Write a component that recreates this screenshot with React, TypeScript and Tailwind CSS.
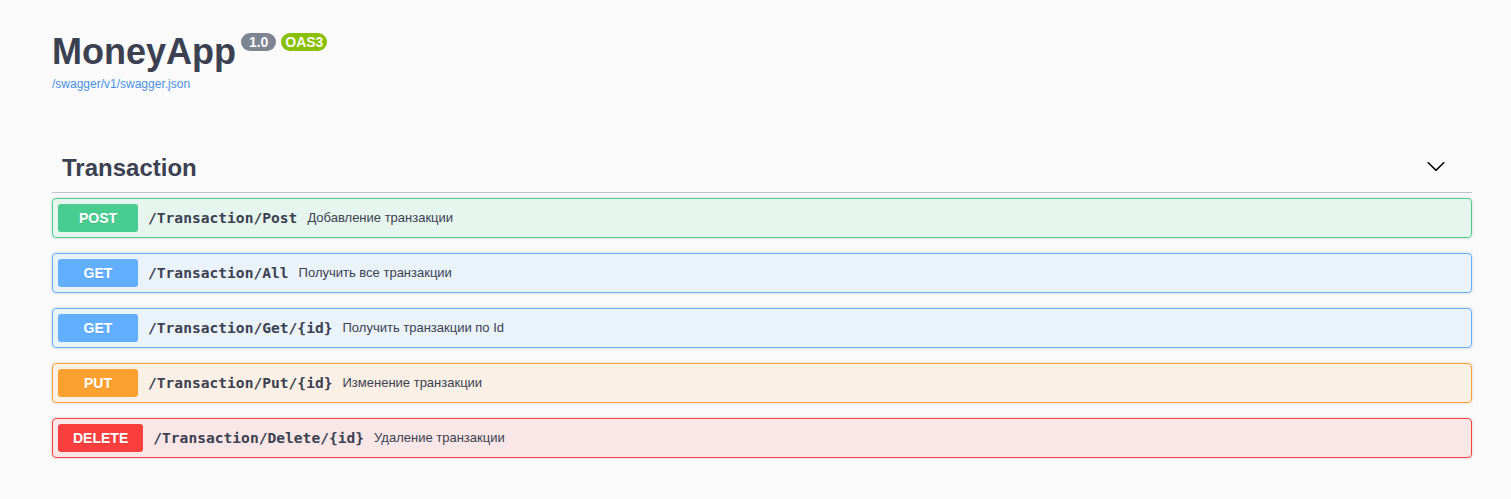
import React from "react";

type Op = {
  method: string;
  path: string;
  desc: string;
  bg: string;
  border: string;
  badge: string;
};

const ops: Op[] = [
  {
    method: "POST",
    path: "/Transaction/Post",
    desc: "Добавление транзакции",
    bg: "bg-[rgba(73,204,144,0.1)]",
    border: "border-[#49cc90]",
    badge: "bg-[#49cc90]",
  },
  {
    method: "GET",
    path: "/Transaction/All",
    desc: "Получить все транзакции",
    bg: "bg-[rgba(97,175,254,0.1)]",
    border: "border-[#61affe]",
    badge: "bg-[#61affe]",
  },
  {
    method: "GET",
    path: "/Transaction/Get/{id}",
    desc: "Получить транзакции по Id",
    bg: "bg-[rgba(97,175,254,0.1)]",
    border: "border-[#61affe]",
    badge: "bg-[#61affe]",
  },
  {
    method: "PUT",
    path: "/Transaction/Put/{id}",
    desc: "Изменение транзакции",
    bg: "bg-[rgba(252,161,48,0.1)]",
    border: "border-[#fca130]",
    badge: "bg-[#fca130]",
  },
  {
    method: "DELETE",
    path: "/Transaction/Delete/{id}",
    desc: "Удаление транзакции",
    bg: "bg-[rgba(249,62,62,0.1)]",
    border: "border-[#f93e3e]",
    badge: "bg-[#f93e3e]",
  },
];

const sans = "font-['Liberation_Sans',Arial,sans-serif]";

export default function App() {
  return (
    <div className={`min-h-screen bg-[#fafafa] ${sans} text-[#3b4151]`}>
      <div className="ml-[52px] w-[1420px] pt-[31px]">
        {/* Info */}
        <div className="flex items-start">
          <h2 className="m-0 text-[36px] font-bold leading-[41px] text-[#3b4151]">
            MoneyApp
          </h2>
          <div className="mt-[2px] flex">
            <span className="ml-[5px] inline-block rounded-[57px] bg-[#7d8492] px-[4px] py-[2px]">
              <pre className={`m-0 whitespace-pre text-[14px] font-bold leading-[14px] text-[#fafafa] ${sans}`}>
                {" 1.0 "}
              </pre>
            </span>
            <span className="ml-[5px] inline-block rounded-[57px] bg-[#89bf04] px-[4px] py-[2px]">
              <pre className={`m-0 text-[14px] font-bold leading-[14px] text-[#fafafa] ${sans}`}>
                OAS3
              </pre>
            </span>
          </div>
        </div>
        <a className="mt-[5px] block text-[12px] leading-[14px] text-[#4990e2]">
          /swagger/v1/swagger.json
        </a>

        {/* Tag section */}
        <div className="mt-[53px]">
          <div className="flex h-[49px] items-center justify-between border-b border-[rgba(59,65,81,0.3)] pl-[10px] pr-[26px]">
            <h3 className="m-0 text-[24px] font-bold leading-[27.6px] text-[#3b4151]">
              Transaction
            </h3>
            <svg
              width="20"
              height="20"
              viewBox="0 0 20 20"
              className="mt-[-4px]"
              aria-hidden="true"
            >
              <path
                fill="#000"
                d="M17.418 6.109c.272-.268.709-.268.979 0s.271.701 0 .969l-7.908 7.83c-.27.268-.707.268-.979 0l-7.908-7.83c-.27-.268-.27-.701 0-.969.271-.268.709-.268.979 0L10 13.25l7.418-7.141z"
              />
            </svg>
          </div>

          <div className="mt-[5px]">
            {ops.map((op, i) => (
              <div
                key={i}
                className={`mb-[15px] rounded-[4px] border ${op.border} ${op.bg} shadow-[0_0_3px_rgba(0,0,0,0.19)]`}
              >
                <div className="flex items-center p-[5px]">
                  <span
                    className={`min-w-[80px] rounded-[3px] px-[15px] py-[6px] text-center text-[14px] font-bold leading-[16px] text-white ${op.badge} text-shadow-[0_1px_0_rgba(0,0,0,0.1)]`}
                  >
                    {op.method}
                  </span>
                  <span className="px-[10px] font-['DejaVu_Sans_Mono',monospace] text-[14.6px] font-bold text-[#3b4151]">
                    {op.path}
                  </span>
                  <span className="text-[13px] text-[#3b4151]">{op.desc}</span>
                </div>
              </div>
            ))}
          </div>
        </div>
      </div>
    </div>
  );
}
